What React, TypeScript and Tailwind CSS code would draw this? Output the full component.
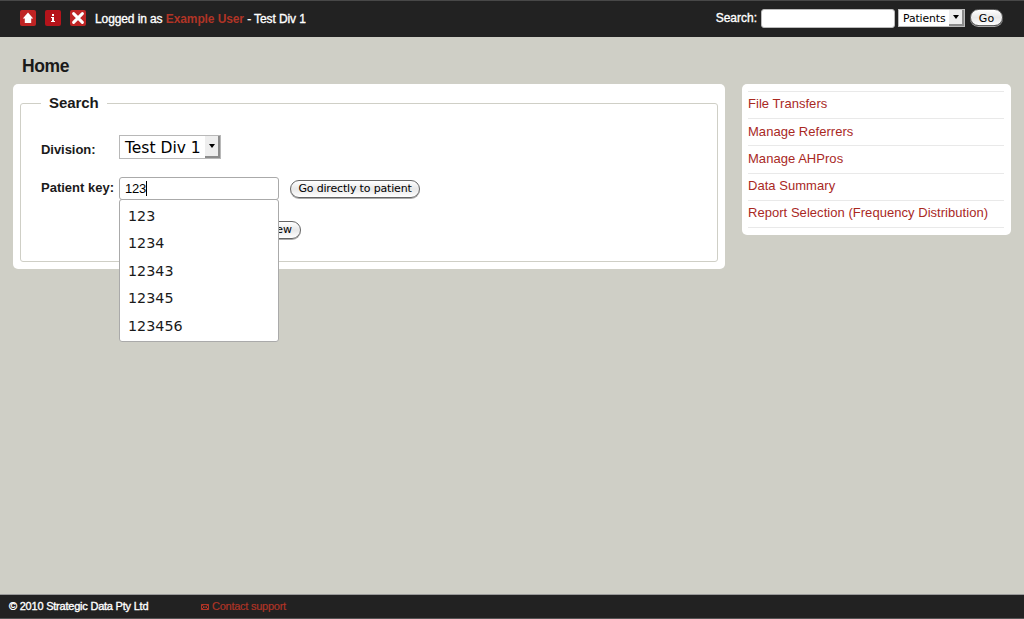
import type { ReactNode } from "react";

const links = [
  { label: "File Transfers", row: "h-[27px]" },
  { label: "Manage Referrers", row: "h-[27px] pt-px" },
  { label: "Manage AHPros", row: "h-[28px] pt-px" },
  { label: "Data Summary", row: "h-[27px]" },
  { label: "Report Selection (Frequency Distribution)", row: "h-[27px]" },
];

const suggestions = ["123", "1234", "12343", "12345", "123456"];

function IconTile({ children, color }: { children: ReactNode; color: string }) {
  return (
    <a href="#" className={`block size-4 rounded-[2px] ${color}`}>
      <svg viewBox="0 0 16 16" className="block size-4">{children}</svg>
    </a>
  );
}

function PillButton({ children, className }: { children: ReactNode; className: string }) {
  return (
    <button
      type="button"
      className={`flex shrink-0 items-center justify-center whitespace-nowrap rounded-full border border-[#656565] bg-linear-to-b from-white via-[#e8e8e8] to-white font-['DejaVu_Sans',sans-serif] leading-4 text-black shadow-[0_1px_0_#aaa] ${className}`}
    >
      {children}
    </button>
  );
}

export default function App() {
  return (
    <div className="flex h-[619px] w-[1024px] flex-col overflow-hidden bg-[#cfcfc6] font-['Liberation_Sans',Arial,sans-serif] text-[#1a1a1a]">
      <header className="flex h-[37px] shrink-0 items-start border-t border-[#484848] bg-[#222] text-[12px] text-white">
        <nav className="ml-5 mt-[9px] flex gap-[9px]">
          <IconTile color="bg-[#bf2424]">
            <path d="M8 2.6 13.2 8.6H11.2V13H4.8V8.6H2.8Z" fill="#fff" />
          </IconTile>
          <IconTile color="bg-[#b5141b]">
            <path d="M7 4h2v2H7ZM6 7h3v4h1v1H6v-1h1V8H6Z" fill="#fff" />
          </IconTile>
          <IconTile color="bg-[#bf2424]">
            <path d="m3.6 3.6 8.8 8.8m0-8.8-8.8 8.8" stroke="#fff" strokeWidth="3" strokeLinecap="round" />
          </IconTile>
        </nav>
        <p className="ml-[9px] mt-[10px] whitespace-pre leading-4 tracking-[-0.1px] [-webkit-text-stroke:0.35px]">
          Logged in as <a href="#" className="font-bold text-[#b03426] [-webkit-text-stroke:0]">Example User</a> - Test Div 1
        </p>
        <form className="ml-auto mr-[21px] flex">
          <label htmlFor="q" className="mr-1 mt-[9px] leading-4 [-webkit-text-stroke:0.35px]">Search:</label>
          <input id="q" className="mt-[8px] h-[19px] w-[134px] rounded-[3px] border border-[#bbb] bg-white" />
          <div className="ml-[3px] mt-[8px] flex h-[18px] w-[67px] border border-[#bbb] bg-white pl-1 font-['DejaVu_Sans',sans-serif] text-[10.8px] leading-[17px] text-black">
            <span className="grow tracking-[-0.1px]">Patients</span>
            <span className="flex h-4 w-[15px] items-center justify-center border-b-2 border-r-2 border-[#8c8c8c] bg-[#eee]">
              <svg viewBox="0 0 6 4" className="h-[4px] w-[6px]"><path d="M0 0h6L3 4Z" /></svg>
            </span>
          </div>
          <PillButton className="ml-[5px] mt-[8px] h-[17px] w-[33px] pt-[2px] text-[11px]">Go</PillButton>
        </form>
      </header>

      <main className="grow">
        <h1 className="ml-[22px] pt-[18px] text-[17.5px] font-bold leading-[22px] tracking-[-0.4px]">Home</h1>
        <div className="ml-[13px] mt-[7px] flex items-start gap-[17px]">
          <section className="h-[185px] w-[712px] rounded-[5px] bg-white px-[7px] pt-[9px]">
            <fieldset className="h-[169px] rounded-[3px] border border-[#cfcfc6] pl-5">
              <legend className="h-[20px] px-2 text-[15px] font-bold leading-[19px] tracking-[-0.05px]">Search</legend>
              <div className="mt-[22px] flex h-6">
                <label className="w-[78px] pt-[7px] text-[13px] font-bold leading-4 tracking-[-0.05px]">Division:</label>
                <div className="flex h-6 w-[102px] border border-[#b8b8b8] pl-[5px] font-['DejaVu_Sans',sans-serif] text-[15.5px] leading-[24px] text-black">
                  <span className="grow whitespace-nowrap">Test Div 1</span>
                  <span className="flex h-[22px] w-[15px] items-center justify-center border-b-2 border-r-2 border-[#8c8c8c] bg-[#eee]">
                    <svg viewBox="0 0 6 4" className="h-[4px] w-[6px]"><path d="M0 0h6L3 4Z" /></svg>
                  </span>
                </div>
              </div>
              <div className="mt-[18px] flex h-[23px]">
                <label className="w-[78px] whitespace-nowrap pt-[3px] text-[13px] font-bold leading-4">Patient key:</label>
                <div className="relative h-[23px] w-[160px] rounded-[3px] border border-[#aaa] bg-white">
                  <div className="flex h-[21px] items-center pl-[5px] text-[13px] text-black">
                    <span className="tracking-[-0.2px]">123</span>
                    <span className="h-[15px] w-px bg-black" />
                  </div>
                  <ul className="absolute -left-px top-[21px] z-10 flex h-[143px] w-[160px] flex-col rounded-[3px] border border-[#aaa] bg-white pl-2 pt-[3px] font-['DejaVu_Sans',sans-serif] text-[14.3px]">
                    {suggestions.map((s) => (
                      <li key={s} className="h-[27.4px] leading-[26px]">{s}</li>
                    ))}
                  </ul>
                </div>
                <PillButton className="ml-[11px] mt-[3px] h-[18px] w-[130px] text-[11px] tracking-[-0.17px]">Go directly to patient</PillButton>
              </div>
              <div className="ml-[78px] mt-[21px]">
                <PillButton className="h-[18px] w-[182px] text-[11px]">
                  <span className="w-full pr-[8px] text-right">Add new</span>
                </PillButton>
              </div>
            </fieldset>
          </section>
          <aside className="h-[151px] w-[269px] rounded-[5px] bg-white pl-[6px] pr-[7px] pt-[7px]">
            <ul className="border-t border-[#e9e9e9] text-[13px] tracking-[0.04px] text-[#a9291f]">
              {links.map((l) => (
                <li key={l.label} className={`border-b border-[#e9e9e9] ${l.row}`}>
                  <a href="#" className="block whitespace-nowrap leading-[24px]">{l.label}</a>
                </li>
              ))}
            </ul>
          </aside>
        </div>
      </main>

      <footer className="flex h-[25px] shrink-0 items-start border-b border-t border-b-[#555] border-t-[#999] bg-[#222] text-[11px] leading-[23px]">
        <p className="ml-[9px] w-[192px] tracking-[-0.22px] text-white [-webkit-text-stroke:0.35px]">© 2010 Strategic Data Pty Ltd</p>
        <a href="#" className="flex items-center tracking-[-0.25px] text-[#b03426] [-webkit-text-stroke:0.2px]">
          <svg viewBox="0 0 8 6" className="mr-[3px] h-[6px] w-2" fill="none" stroke="currentColor">
            <path d="M.5.5h7v5h-7Zm0 0L4 3.5 7.5.5M.5 5.5 3 3M7.5 5.5 5 3" />
          </svg>
          Contact support
        </a>
      </footer>
    </div>
  );
}
